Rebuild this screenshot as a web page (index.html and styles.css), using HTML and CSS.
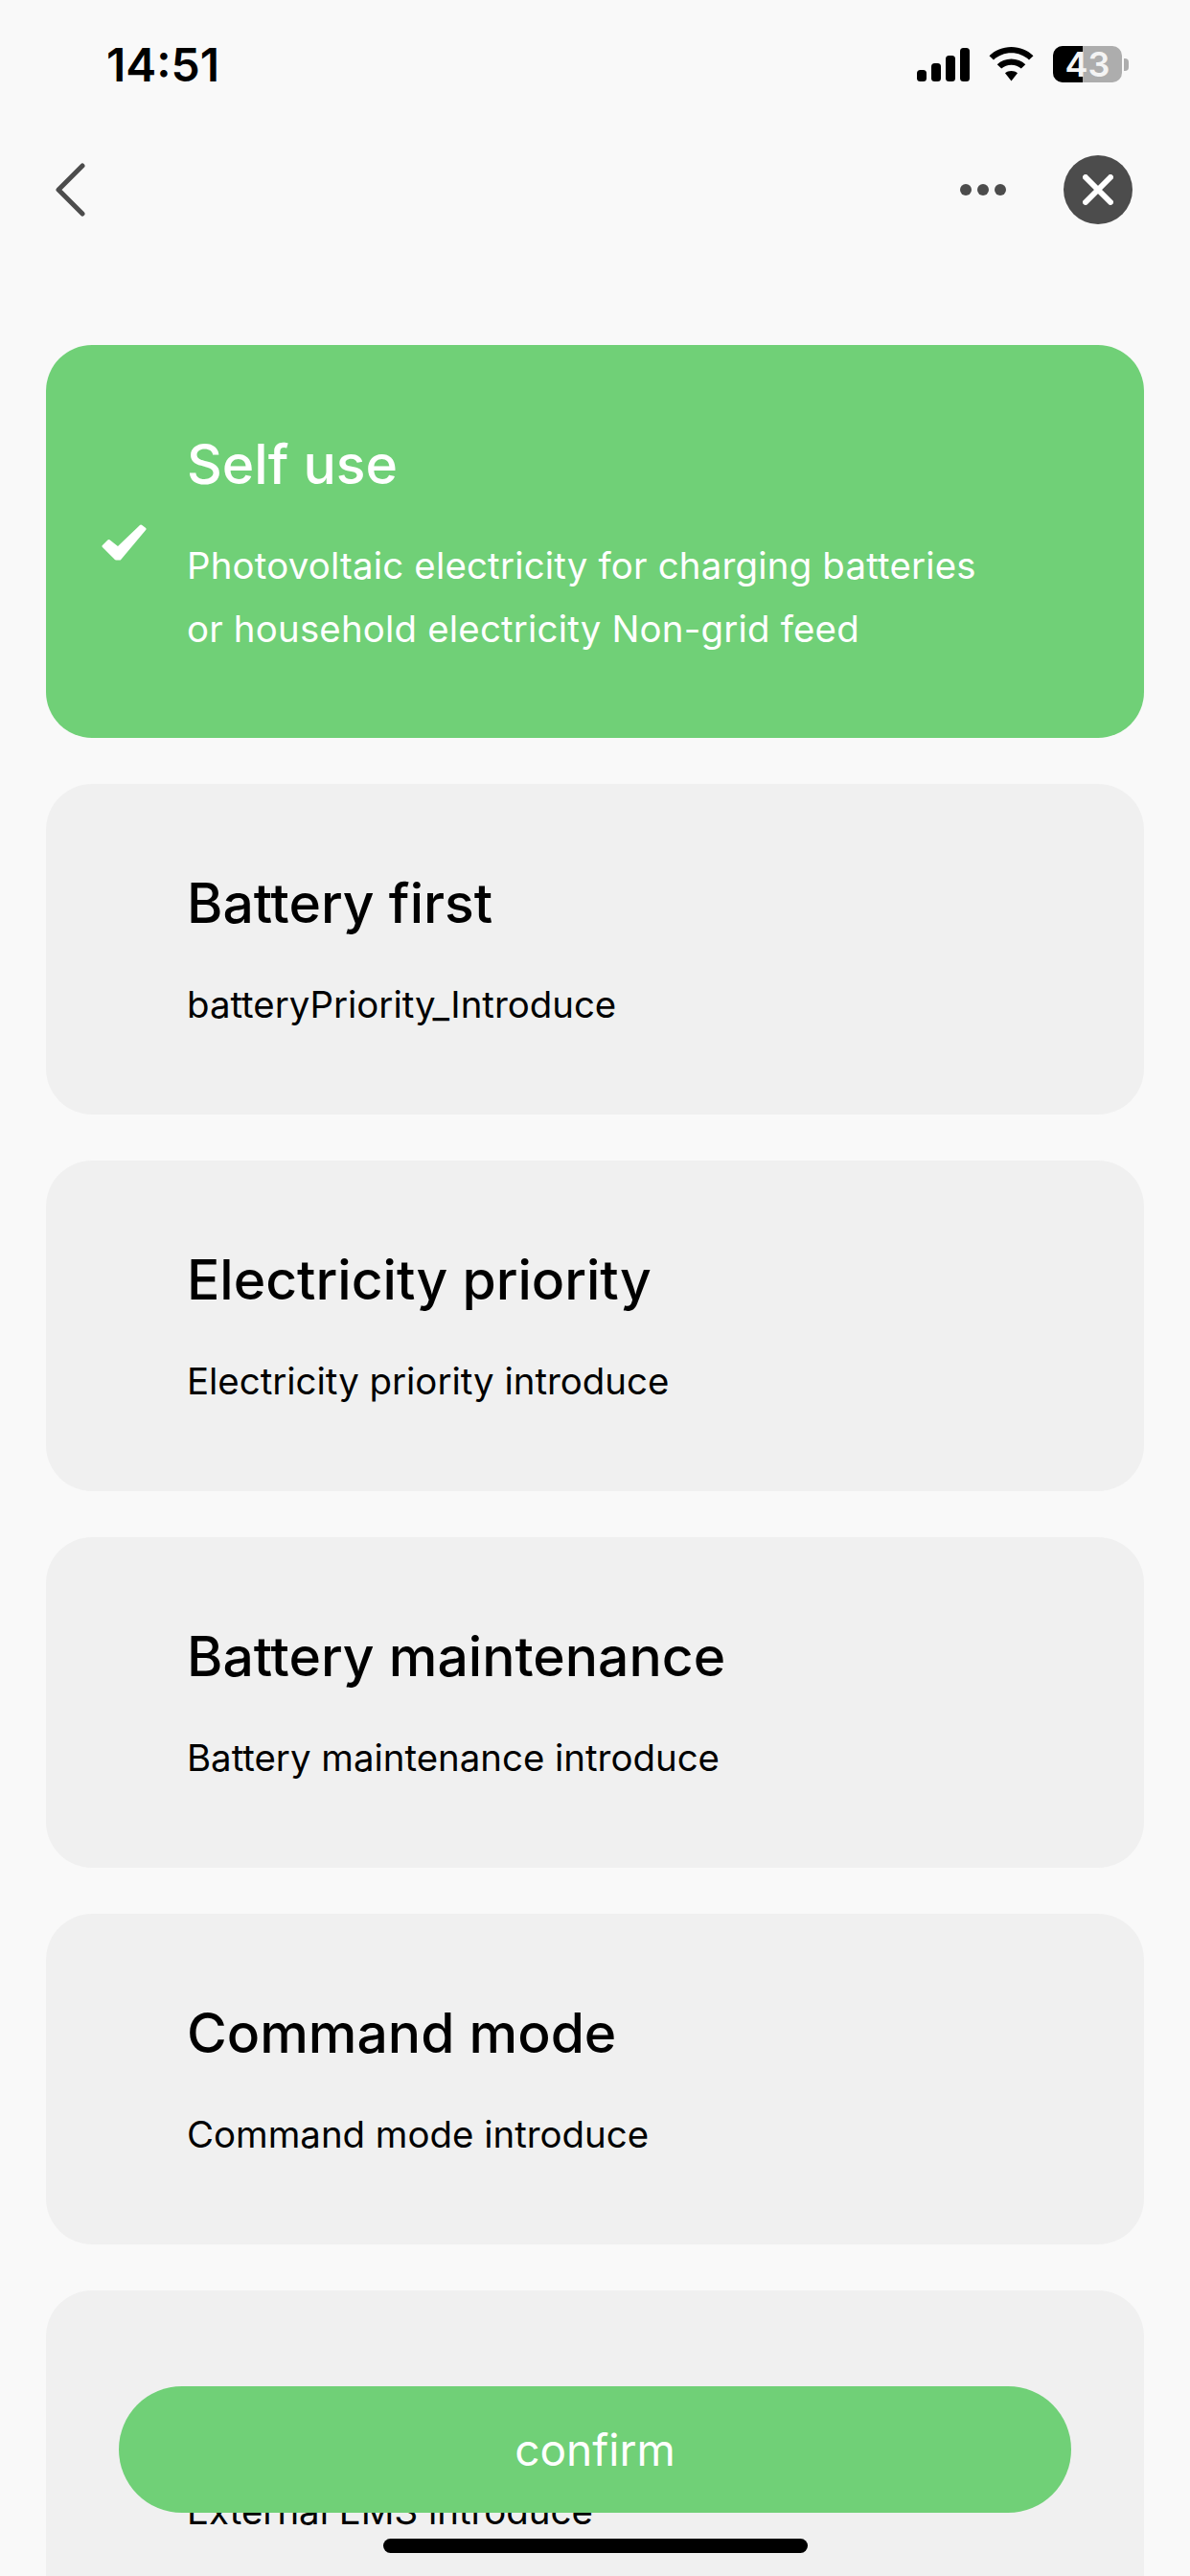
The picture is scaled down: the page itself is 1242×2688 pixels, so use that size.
FILE: index.html
```html
<!DOCTYPE html>
<html lang="en">
<head>
  <meta charset="UTF-8" />
  <title>Mode select</title>
  <link rel="stylesheet" href="styles.css">
</head>
<body>
  <div class="screen">
    <!-- Status bar -->
    <div class="status-bar">
      <div class="time">14:51</div>
      <div class="status-icons">
        <svg class="signal" width="55" height="35" viewBox="0 0 55 35">
          <rect x="0" y="23" width="10" height="12" rx="3.5" />
          <rect x="15" y="16" width="10" height="19" rx="3.5" />
          <rect x="30" y="8" width="10" height="27" rx="3.5" />
          <rect x="45" y="0" width="10" height="35" rx="3.5" />
        </svg>
        <svg class="wifi" width="47" height="36" viewBox="0 0 47 36">
          <path d="M23.5 0C14.5 0 6.5 3.5 0.5 9.2L5 13.5C10 9 16.4 6.3 23.5 6.3S37 9 42 13.5L46.5 9.2C40.5 3.5 32.5 0 23.5 0Z" />
          <path d="M23.5 12.5C17.7 12.5 12.6 14.7 8.7 18.2L13.2 22.6C16 20.2 19.6 18.8 23.5 18.8S31 20.2 33.8 22.6L38.3 18.2C34.4 14.7 29.3 12.5 23.5 12.5Z" />
          <path d="M23.5 25C21 25 18.8 25.9 17 27.3L23.5 35.5L30 27.3C28.2 25.9 26 25 23.5 25Z" />
        </svg>
        <div class="battery">
          <div class="battery-body">
            <div class="battery-fill"></div>
            <span class="battery-level">43</span>
          </div>
          <div class="battery-nub"></div>
        </div>
      </div>
    </div>

    <!-- Nav -->
    <div class="nav">
      <svg class="back" width="32" height="56" viewBox="0 0 32 56">
        <path d="M29 3L4 28L29 53" />
      </svg>
      <div class="nav-right">
        <div class="dots"><i></i><i></i><i></i></div>
        <div class="close">
          <svg width="32" height="32" viewBox="0 0 32 32">
            <path d="M3 3L29 29M29 3L3 29" />
          </svg>
        </div>
      </div>
    </div>

    <!-- Modes -->
    <div class="mode-list">
      <div class="mode-card selected">
        <svg class="check" width="47" height="39" viewBox="0 0 47 39">
          <path d="M2 23L7.5 17.5L17 25L41 2L45 5L19 36L15 36Z" />
        </svg>
        <div class="mode-title">Self use</div>
        <div class="mode-desc">Photovoltaic electricity for charging batteries<br>or household electricity Non-grid feed</div>
      </div>
      <div class="mode-card">
        <div class="mode-title">Battery first</div>
        <div class="mode-desc">batteryPriority_Introduce</div>
      </div>
      <div class="mode-card">
        <div class="mode-title">Electricity priority</div>
        <div class="mode-desc">Electricity priority introduce</div>
      </div>
      <div class="mode-card">
        <div class="mode-title">Battery maintenance</div>
        <div class="mode-desc">Battery maintenance introduce</div>
      </div>
      <div class="mode-card">
        <div class="mode-title">Command mode</div>
        <div class="mode-desc">Command mode introduce</div>
      </div>
      <div class="mode-card">
        <div class="mode-title">External EMS</div>
        <div class="mode-desc">External EMS introduce</div>
      </div>
    </div>

    <button class="confirm">confirm</button>
    <div class="home-bar"></div>
  </div>
</body>
</html>
```

FILE: styles.css
```css
* {
  box-sizing: border-box;
  margin: 0;
  padding: 0;
}

html, body {
  width: 1242px;
  height: 2688px;
  overflow: hidden;
  background: #f9f9f9;
  font-family: Inter, 'Liberation Sans', sans-serif;
  color: #000;
}

.screen {
  position: relative;
  height: 2688px;
  overflow: hidden;
}

.status-bar {
  display: flex;
  justify-content: space-between;
  align-items: center;
  height: 134px;
  padding: 0 64px 0 111px;
}

.time {
  font-size: 48px;
  font-weight: 600;
  color: #000;
}

.status-icons {
  display: flex;
  align-items: center;
  gap: 20px;
}

.signal, .wifi {
  fill: #000;
}

.battery {
  display: flex;
  align-items: center;
  gap: 2px;
}

.battery-body {
  position: relative;
  width: 72px;
  height: 38px;
  border-radius: 10px;
  background: #adadad;
  display: flex;
  align-items: center;
  justify-content: center;
}

.battery-fill {
  position: absolute;
  left: 0;
  top: 0;
  bottom: 0;
  width: 43%;
  border-radius: 10px 0 0 10px;
  background: #000;
}

.battery-level {
  position: relative;
  font-size: 36px;
  line-height: 38px;
  font-weight: 600;
  color: #f4f4f4;
}

.battery-nub {
  width: 5px;
  height: 13px;
  border-radius: 0 4px 4px 0;
  background: #adadad;
}

.nav {
  display: flex;
  justify-content: space-between;
  align-items: center;
  height: 128px;
  padding: 0 60px 0 57px;
}

.back path {
  fill: none;
  stroke: #4c4c4c;
  stroke-width: 5;
  stroke-linecap: round;
  stroke-linejoin: round;
}

.nav-right {
  display: flex;
  align-items: center;
  gap: 60px;
}

.dots {
  display: flex;
  gap: 6px;
}

.dots i {
  width: 12px;
  height: 12px;
  border-radius: 50%;
  background: #4c4c4c;
}

.close {
  width: 72px;
  height: 72px;
  border-radius: 50%;
  background: #4c4c4c;
  display: flex;
  align-items: center;
  justify-content: center;
}

.close path {
  fill: none;
  stroke: #fff;
  stroke-width: 6;
  stroke-linecap: round;
}

.mode-list {
  display: flex;
  flex-direction: column;
  gap: 48px;
  padding: 98px 48px 0;
}

.mode-card {
  position: relative;
  flex-shrink: 0;
  padding: 92px 48px 82px 147px;
  border-radius: 48px;
  background: #f0f0f0;
}

.mode-card.selected {
  padding-bottom: 81px;
  background: #70d077;
  color: #fff;
}

.mode-title {
  font-size: 57px;
  line-height: 66px;
  font-weight: 500;
  margin-bottom: 39px;
}

.mode-desc {
  font-size: 38.4px;
  line-height: 66px;
}

.selected .mode-desc {
  letter-spacing: 0.2px;
}

.check {
  position: absolute;
  left: 58px;
  top: 187px;
}

.check path {
  fill: #fff;
  stroke: #fff;
  stroke-width: 3;
  stroke-linejoin: round;
}

.confirm {
  position: absolute;
  left: 124px;
  top: 2490px;
  width: 994px;
  height: 132px;
  border: none;
  border-radius: 66px;
  background: #70d077;
  color: #fff;
  font-family: inherit;
  font-size: 46px;
}

.home-bar {
  position: absolute;
  left: 400px;
  top: 2649px;
  width: 443px;
  height: 15px;
  border-radius: 8px;
  background: #000;
}
```
